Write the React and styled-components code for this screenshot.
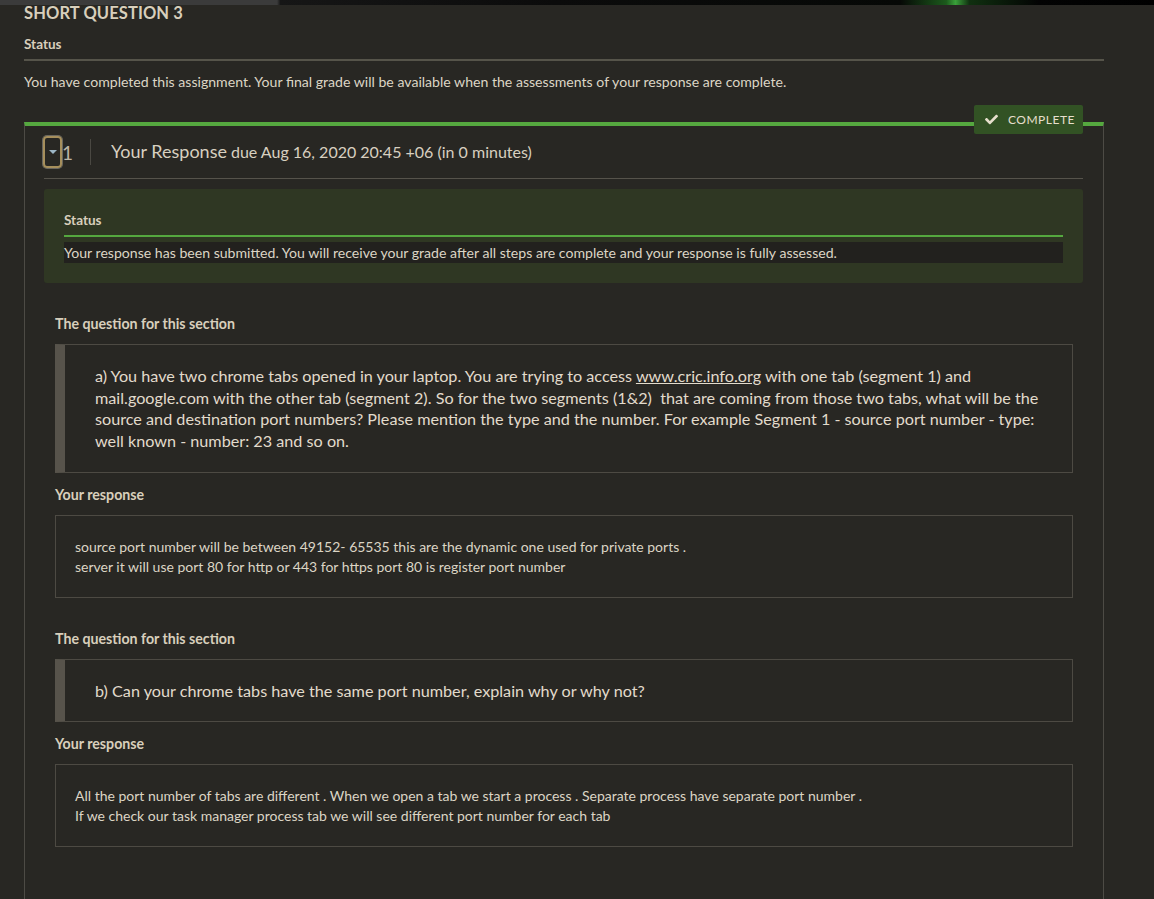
import styled, { createGlobalStyle } from "styled-components";
import { FaCheck } from "react-icons/fa";

const GlobalStyle = createGlobalStyle`
  body {
    margin: 0;
    background: #282723;
    color: #dcd5c5;
    font-family: Lato, "Liberation Sans", sans-serif;
  }
`;

const TopStrip = styled.div`
  height: 5px;
  background: linear-gradient(
    to right,
    #3b3b3b 0%,
    #3b3b3b 24%,
    #161616 24.3%,
    #0b0b0b 48%,
    #060806 78%,
    #1c5a1c 82%,
    #3aa03a 82.8%,
    #103010 84%,
    #030303 90%,
    #000 100%
  );
`;

const Page = styled.div`
  padding: 0 50px 0 24px;
`;

const Title = styled.h2`
  margin: 0;
  font-size: 16.5px;
  line-height: 17px;
  font-weight: 700;
  letter-spacing: 0.1px;
  text-transform: uppercase;
  color: #d8cfbc;
`;

const Label = styled.div`
  margin-top: ${(p) => p.$top || 0}px;
  font-size: ${(p) => p.$size || 14.2}px;
  line-height: 16px;
  font-weight: 700;
  color: #d8cfbc;
`;

const Rule = styled.div`
  height: 2px;
  margin-top: 7px;
  background: ${(p) => p.$color || "#56544a"};
`;

const Message = styled.p`
  margin: 12px 0 0;
  font-size: 14.1px;
  line-height: 18px;
`;

const Card = styled.div`
  position: relative;
  margin-top: 31px;
  border-top: 4px solid #55a83f;
  border-left: 1px solid #4d4b45;
  border-right: 1px solid #4d4b45;
  padding: 0 20px 60px 19px;
`;

const Badge = styled.div`
  position: absolute;
  top: -21px;
  right: 20px;
  height: 29px;
  width: 109px;
  box-sizing: border-box;
  display: flex;
  align-items: center;
  gap: 10px;
  padding-left: 11px;
  background: #325224;
  border-radius: 2px;
  color: #e6dfcc;
  font-size: 12px;
  letter-spacing: 0.5px;
  svg {
    font-size: 13px;
  }
`;

const Header = styled.div`
  height: 52px;
  display: flex;
  align-items: center;
  border-bottom: 1px solid #56534b;
`;

const Toggle = styled.button`
  width: 19px;
  height: 32px;
  margin: 0 0 0 -1px;
  padding: 0;
  box-sizing: border-box;
  background: transparent;
  border: 2px solid #a68f5c;
  border-radius: 4px;
  box-shadow: 0 0 0 1px rgba(230, 224, 210, 0.35);
  display: flex;
  align-items: center;
  justify-content: center;

  &::after {
    content: "";
    border-left: 4px solid transparent;
    border-right: 4px solid transparent;
    border-top: 4px solid #9cb6c6;
  }
`;

const Step = styled.span`
  font-size: 19px;
  color: #bdb5a5;
`;

const Separator = styled.span`
  width: 1px;
  height: 26px;
  margin: 0 20px 0 17px;
  background: #4a4842;
`;

const HeaderTitle = styled.div`
  font-size: 18px;
  color: #d8d0c0;
  margin-top: -3px;

  small {
    font-size: 16px;
    margin-left: 4px;
  }
`;

const StatusBox = styled.div`
  margin-top: 10px;
  background: #2f3723;
  border-radius: 3px;
  padding: 23px 20px 20px;
`;

const StatusRow = styled.div`
  margin-top: 5px;
  height: 21px;
  line-height: 21px;
  font-size: 14.1px;
  background: #22211e;
`;

const Section = styled.div`
  margin-top: 33px;
  padding: 0 10px 0 11px;
`;

const QuestionBox = styled.div`
  margin-top: 12px;
  border: 1px solid #4d4a43;
  border-left: 10px solid #57534b;
  padding: 20px 30px;
  font-size: 16.2px;
  line-height: 21.67px;
  color: #e2dbcc;

  a {
    color: inherit;
  }
`;

const ResponseBox = styled.div`
  margin-top: 12px;
  border: 1px solid #4d4a43;
  padding: 21px 20px 20px 19px;
  font-size: 14px;
  line-height: 20px;
`;

const questions = [
  {
    id: "a",
    text: (
      <>
        a) You have two chrome tabs opened in your laptop. You are trying to
        access <a href="#q">www.cric.info.org</a> with one tab (segment 1) and
        mail.google.com with the other tab (segment 2). So for the two segments
        (1&amp;2)&nbsp; that are coming from those two tabs, what will be the
        source and destination port numbers? Please mention the type and the
        number. For example Segment 1 - source port number - type: well known -
        number: 23 and so on.
      </>
    ),
    response: [
      "source port number will be between 49152- 65535 this are the dynamic one used for private ports .",
      "server it will use port 80 for http or 443 for https port 80 is register port number",
    ],
  },
  {
    id: "b",
    text: "b) Can your chrome tabs have the same port number, explain why or why not?",
    response: [
      "All the port number of tabs are different . When we open a tab we start a process . Separate process have separate port number .",
      "If we check our task manager process tab we will see different port number for each tab",
    ],
  },
];

export default function App() {
  return (
    <>
      <GlobalStyle />
      <TopStrip />
      <Page>
        <Title>Short Question 3</Title>
        <Label $top={14} $size={13.5}>
          Status
        </Label>
        <Rule />
        <Message>
          You have completed this assignment. Your final grade will be available
          when the assessments of your response are complete.
        </Message>

        <Card>
          <Badge>
            <FaCheck />
            COMPLETE
          </Badge>
          <Header>
            <Toggle aria-label="toggle" />
            <Step>1</Step>
            <Separator />
            <HeaderTitle>
              Your Response
              <small>due Aug 16, 2020 20:45 +06 (in 0 minutes)</small>
            </HeaderTitle>
          </Header>

          <StatusBox>
            <Label $size={13.5}>Status</Label>
            <Rule $color="#55a83f" />
            <StatusRow>
              Your response has been submitted. You will receive your grade
              after all steps are complete and your response is fully assessed.
            </StatusRow>
          </StatusBox>

          {questions.map((q) => (
            <Section key={q.id}>
              <Label>The question for this section</Label>
              <QuestionBox>{q.text}</QuestionBox>
              <Label $top={14}>Your response</Label>
              <ResponseBox>
                {q.response.map((line) => (
                  <div key={line}>{line}</div>
                ))}
              </ResponseBox>
            </Section>
          ))}
        </Card>
      </Page>
    </>
  );
}
